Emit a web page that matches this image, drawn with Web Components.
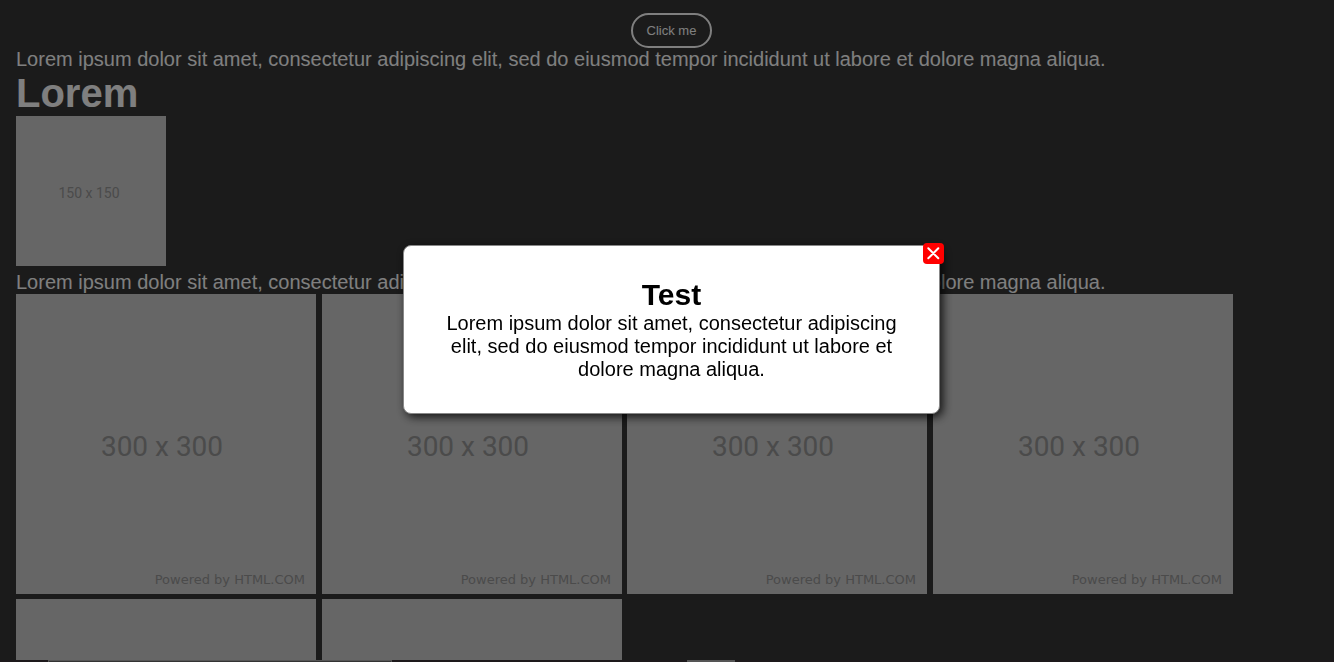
<!DOCTYPE html>
<html lang="en">
<head>
<meta charset="utf-8">
<meta name="viewport" content="width=device-width, initial-scale=1">
<title>Modal</title>
<style>
body { margin: 0; background: #363636; color: #fff; font: 20px/23px "Liberation Sans", Arial, sans-serif; height: 100vh; overflow: hidden; }
</style>
</head>
<body>
<demo-page></demo-page>
<modal-box heading="Test">Lorem ipsum dolor sit amet, consectetur adipiscing elit, sed do eiusmod tempor incididunt ut labore et dolore magna aliqua.</modal-box>
<task-strip></task-strip>
<script>
class PillButton extends HTMLElement {
  constructor() {
    super();
    this.attachShadow({ mode: "open" }).innerHTML = `
      <style>
        :host { display: block; text-align: center; }
        button { display: block; margin: 0 auto; padding: 8px 14px; border: 2px solid #fff; border-radius: 18px; background: transparent; color: #fff; font: 13px/15px "Liberation Sans", Arial, sans-serif; cursor: pointer; }
      </style>
      <button type="button"><slot></slot></button>`;
  }
}
customElements.define("pill-button", PillButton);

class PlaceholderImage extends HTMLElement {
  constructor() {
    super();
    const size = Number(this.getAttribute("size")) || 300;
    const big = size >= 300;
    this.attachShadow({ mode: "open" }).innerHTML = `
      <style>
        :host { display: inline-block; vertical-align: baseline; }
        svg { display: block; }
        text { fill: #969696; }
        .dim { font-family: Roboto, sans-serif; font-size: ${big ? 28 : 14}px; text-anchor: middle; }
        .by { font: 13px "DejaVu Sans", Verdana, sans-serif; text-anchor: end; }
      </style>
      <svg width="${size}" height="${size}" role="img" aria-label="${size} x ${size}">
        <rect width="${size}" height="${size}" fill="#ccc"/>
        <text class="dim" x="${big ? 146 : 73}" y="${big ? 162 : 82}">${size} x ${size}</text>
        ${big ? `<text class="by" x="289" y="290">Powered by HTML.COM</text>` : ""}
      </svg>`;
  }
}
customElements.define("placeholder-image", PlaceholderImage);

class DemoPage extends HTMLElement {
  constructor() {
    super();
    this.attachShadow({ mode: "open" }).innerHTML = `
      <style>
        :host { display: block; padding: 13px 7px 0 16px; }
        p, h1 { margin: 0; }
        h1 { font-size: 40px; line-height: 45px; }
      </style>
      <pill-button>Click me</pill-button>
      <p>Lorem ipsum dolor sit amet, consectetur adipiscing elit, sed do eiusmod tempor incididunt ut labore et dolore magna aliqua.</p>
      <h1>Lorem</h1>
      <div><placeholder-image size="150"></placeholder-image></div>
      <p>Lorem ipsum dolor sit amet, consectetur adipiscing elit, sed do eiusmod tempor incididunt ut labore et dolore magna aliqua.</p>
      <div>
        <placeholder-image size="300"></placeholder-image>
        <placeholder-image size="300"></placeholder-image>
        <placeholder-image size="300"></placeholder-image>
        <placeholder-image size="300"></placeholder-image>
        <placeholder-image size="300"></placeholder-image>
        <placeholder-image size="300"></placeholder-image>
      </div>`;
  }
}
customElements.define("demo-page", DemoPage);

class ModalBox extends HTMLElement {
  constructor() {
    super();
    this.attachShadow({ mode: "open" }).innerHTML = `
      <style>
        :host { position: fixed; inset: 0; display: flex; align-items: center; justify-content: center; padding: 0 0 4px 9px; background: rgba(0, 0, 0, .5); color: #000; }
        section { position: relative; box-sizing: border-box; width: 40.5%; padding: 32px; border: 1px solid #888; border-radius: 8px; background: #fff; box-shadow: 3px 3px 10px rgba(0, 0, 0, .8); text-align: center; }
        h2 { margin: 0; font-size: 30px; line-height: 34px; }
        p { margin: 0; }
        button { position: absolute; top: -3px; right: -5px; width: 21px; height: 21px; padding: 0; border: 0; border-radius: 4px; background: #f00; cursor: pointer; }
        svg { display: block; margin: auto; }
      </style>
      <section role="dialog" aria-modal="true" aria-labelledby="title">
        <button type="button" aria-label="Close">
          <svg width="21" height="21" viewBox="0 0 21 21" fill="none" stroke="#fff" stroke-width="2" stroke-linecap="round"><path d="M5.3 5.3l10 10M15.3 5.3l-10 10"/></svg>
        </button>
        <h2 id="title"></h2>
        <p><slot></slot></p>
      </section>`;
    this.shadowRoot.querySelector("h2").textContent = this.getAttribute("heading");
    this.shadowRoot.querySelector("button").addEventListener("click", () => this.remove());
  }
}
customElements.define("modal-box", ModalBox);

class TaskStrip extends HTMLElement {
  constructor() {
    super();
    this.attachShadow({ mode: "open" }).innerHTML = `
      <style>
        :host { position: fixed; inset: auto 0 0 0; display: flex; height: 2px; background: #1d191b; }
        .search { box-sizing: border-box; width: 344px; margin-left: 48px; border: 1px solid #555; border-bottom: 0; background: #333; }
        .active { width: 48px; margin-left: 295px; background: #555; }
      </style>
      <div class="search"></div><div class="active"></div>`;
  }
}
customElements.define("task-strip", TaskStrip);
</script>
</body>
</html>
